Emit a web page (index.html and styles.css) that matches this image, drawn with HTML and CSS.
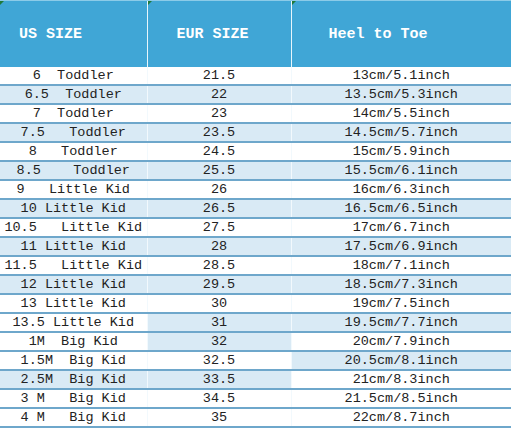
FILE: index.html
```html
<!DOCTYPE html>
<html>
<head>
<meta charset="utf-8">
<link rel="stylesheet" href="styles.css">
</head>
<body>
<table class="sizes">
  <colgroup><col class="c1"><col class="c2"><col class="c3"></colgroup>
  <thead>
    <tr>
      <th class="h1"><span class="mark"></span>US SIZE</th>
      <th class="h2"><span class="mark"></span>EUR SIZE</th>
      <th class="h3"><span class="mark"></span>Heel to Toe</th>
    </tr>
  </thead>
  <tbody>
    <tr><td>6  Toddler</td><td>21.5</td><td>13cm/5.1inch</td></tr>
    <tr class="b"><td>6.5  Toddler</td><td>22</td><td>13.5cm/5.3inch</td></tr>
    <tr><td>7  Toddler</td><td>23</td><td>14cm/5.5inch</td></tr>
    <tr class="b"><td>7.5   Toddler</td><td>23.5</td><td>14.5cm/5.7inch</td></tr>
    <tr><td>8   Toddler</td><td>24.5</td><td>15cm/5.9inch</td></tr>
    <tr class="b"><td>8.5    Toddler</td><td>25.5</td><td>15.5cm/6.1inch</td></tr>
    <tr><td>9   Little Kid</td><td>26</td><td>16cm/6.3inch</td></tr>
    <tr class="b"><td>10 Little Kid</td><td>26.5</td><td>16.5cm/6.5inch</td></tr>
    <tr><td>10.5   Little Kid</td><td>27.5</td><td>17cm/6.7inch</td></tr>
    <tr class="b"><td>11 Little Kid</td><td>28</td><td>17.5cm/6.9inch</td></tr>
    <tr><td>11.5   Little Kid</td><td>28.5</td><td>18cm/7.1inch</td></tr>
    <tr class="b"><td>12 Little Kid</td><td>29.5</td><td>18.5cm/7.3inch</td></tr>
    <tr><td>13 Little Kid</td><td>30</td><td>19cm/7.5inch</td></tr>
    <tr><td>13.5 Little Kid</td><td class="lb">31</td><td class="lb">19.5cm/7.7inch</td></tr>
    <tr><td>1M  Big Kid</td><td class="lb">32</td><td>20cm/7.9inch</td></tr>
    <tr><td>1.5M  Big Kid</td><td>32.5</td><td class="lb">20.5cm/8.1inch</td></tr>
    <tr><td class="lb">2.5M  Big Kid</td><td class="lb">33.5</td><td>21cm/8.3inch</td></tr>
    <tr><td>3 M   Big Kid</td><td>34.5</td><td>21.5cm/8.5inch</td></tr>
    <tr><td>4 M   Big Kid</td><td>35</td><td>22cm/8.7inch</td></tr>
  </tbody>
</table>
</body>
</html>
```
FILE: styles.css
```css
html, body {
  margin: 0;
  padding: 0;
  background: #ffffff;
}

.sizes {
  width: 511px;
  border-collapse: collapse;
  table-layout: fixed;
  font-family: "Liberation Mono", "DejaVu Sans Mono", monospace;
  color: #222222;
}

.c1 { width: 147px; }
.c2 { width: 144px; }
.c3 { width: 220px; }

.sizes thead th {
  position: relative;
  height: 66px;
  padding: 0;
  background: #40a6d6;
  border-top: 1px solid #8ccbe8;
  color: #ffffff;
  font-size: 15px;
  font-weight: bold;
  text-align: left;
  vertical-align: middle;
  white-space: pre;
}

.sizes thead .h1 { padding-left: 19px; }
.sizes thead .h2 { padding-left: 29px; border-left: 1px solid #e8f6fc; }
.sizes thead .h3 { padding-left: 37px; border-left: 1px solid #e8f6fc; }

.mark {
  position: absolute;
  left: 0;
  top: 0;
  width: 0;
  height: 0;
  border-top: 4px solid #1f7a3a;
  border-right: 4px solid transparent;
}

.sizes tbody td {
  height: 17px;
  padding: 0;
  font-size: 13.5px;
  line-height: 17px;
  text-align: center;
  white-space: pre;
  background: #ffffff;
  border-bottom: 2px solid #6ea7cb;
  overflow: hidden;
}

.sizes tbody td + td {
  border-left: 1px solid #f2f9fd;
}

.sizes tbody tr.b td,
.sizes tbody td.lb {
  background: #d9eaf5;
}
```
